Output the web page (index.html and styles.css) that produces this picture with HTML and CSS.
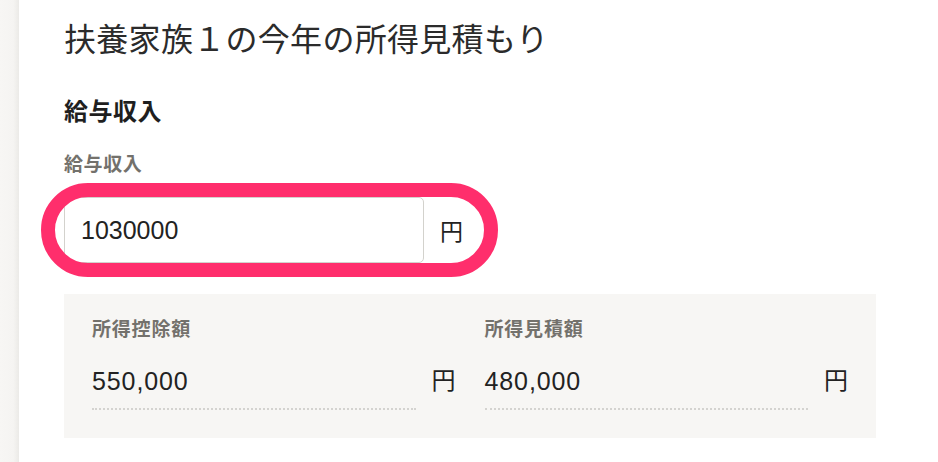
FILE: index.html
```html
<!DOCTYPE html>
<html lang="ja">
<head>
<meta charset="utf-8">
<title>扶養家族１の今年の所得見積もり</title>
<link rel="stylesheet" href="styles.css">
</head>
<body>
<div class="page">
  <aside class="rail"></aside>
  <main class="content">
    <h1 class="title">扶養家族１の今年の所得見積もり</h1>
    <h2 class="section">給与収入</h2>
    <label class="field-label" for="salary">給与収入</label>
    <div class="input-group">
      <input id="salary" class="input" type="text" value="1030000">
      <span class="addon">円</span>
      <span class="highlight" aria-hidden="true"></span>
    </div>
    <div class="result">
      <div class="result-col">
        <div class="result-label">所得控除額</div>
        <div class="result-row">
          <div class="result-value">550,000</div>
          <span class="unit">円</span>
        </div>
      </div>
      <div class="result-col">
        <div class="result-label">所得見積額</div>
        <div class="result-row">
          <div class="result-value">480,000</div>
          <span class="unit">円</span>
        </div>
      </div>
    </div>
  </main>
</div>
</body>
</html>
```
FILE: styles.css
```css
* { box-sizing: border-box; }

html, body {
  margin: 0;
  padding: 0;
  background: #ffffff;
}

body {
  font-family: "Liberation Sans", "Noto Sans CJK JP", sans-serif;
  color: #222222;
}

.page {
  display: flex;
  min-height: 462px;
}

.rail {
  width: 19px;
  flex: none;
  background: linear-gradient(to right, #f7f6f4 0, #f5f4f2 70%, #ebeae7 100%);
}

.content {
  flex: 1;
  padding: 20px 62px 0 45px;
}

.title {
  margin: 0;
  font-size: 32px;
  line-height: 40px;
  font-weight: 400;
  color: #2b2b2b;
  letter-spacing: 0.3px;
}

.section {
  margin: 36px 0 0;
  font-size: 24px;
  line-height: 32px;
  font-weight: 700;
  color: #1f1f1f;
  letter-spacing: 0.5px;
}

.field-label {
  display: block;
  margin-top: 25px;
  font-size: 19px;
  line-height: 24px;
  font-weight: 700;
  color: #73716c;
  letter-spacing: 0.6px;
}

.input-group {
  position: relative;
  display: flex;
  align-items: stretch;
  width: 410px;
  height: 66px;
  margin-top: 20px;
}

.input {
  width: 360px;
  height: 66px;
  border: 1px solid #d3d2cd;
  border-radius: 5px;
  padding: 0 16px;
  font-family: "Liberation Sans", sans-serif;
  font-size: 25px;
  color: #222222;
  background: #ffffff;
  outline: none;
}

.addon {
  display: flex;
  align-items: center;
  padding-left: 16px;
  font-size: 23px;
  color: #222222;
}

.highlight {
  position: absolute;
  left: -23px;
  top: -14px;
  width: 457px;
  height: 94px;
  border: 14px solid #ff2e6c;
  border-radius: 47px;
  pointer-events: none;
}

.result {
  display: grid;
  grid-template-columns: 1fr 1fr;
  column-gap: 29px;
  margin-top: 31px;
  padding: 24px 28px 28px;
  background: #f7f6f4;
}

.result-label {
  font-size: 19px;
  line-height: 24px;
  font-weight: 700;
  color: #73716c;
  letter-spacing: 0.8px;
}

.result-row {
  display: flex;
  align-items: flex-start;
  gap: 16px;
  margin-top: 23px;
}

.result-value {
  flex: 1;
  font-size: 25px;
  line-height: 32px;
  padding-bottom: 11px;
  border-bottom: 2px dotted #d4d3d0;
  color: #222222;
  letter-spacing: 0.9px;
}

.unit {
  font-size: 24px;
  line-height: 32px;
  color: #222222;
}
```
